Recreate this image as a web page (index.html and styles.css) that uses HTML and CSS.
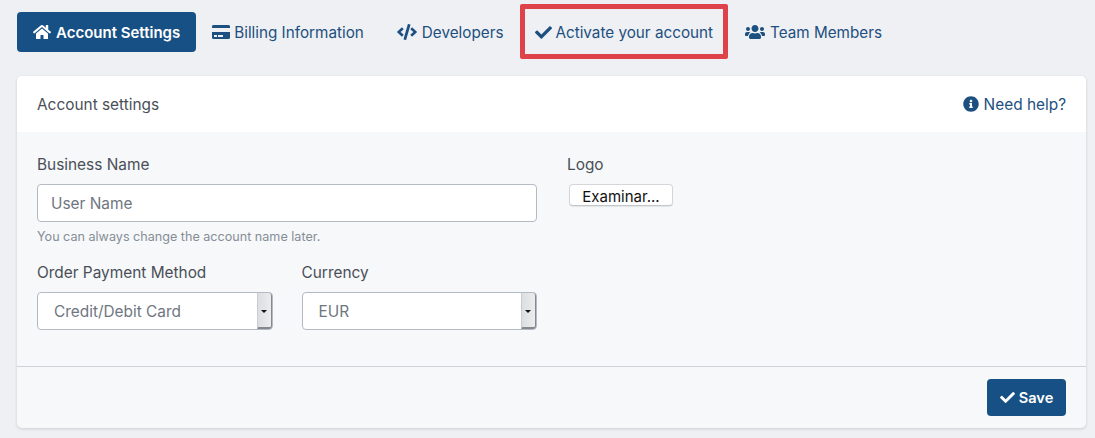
FILE: index.html
```html
<!DOCTYPE html>
<html lang="en">
<head>
<meta charset="utf-8">
<title>Account settings</title>
<link rel="stylesheet" href="styles.css">
</head>
<body>
<svg class="defs" aria-hidden="true">
  <symbol id="i-home" viewBox="0 0 576 512"><path d="M280.37 148.26L96 300.11V464a16 16 0 0 0 16 16l112.06-.29a16 16 0 0 0 15.92-16V368a16 16 0 0 1 16-16h64a16 16 0 0 1 16 16v95.64a16 16 0 0 0 16 16.05L464 480a16 16 0 0 0 16-16V300L295.67 148.26a12.19 12.19 0 0 0-15.3 0zM571.6 251.47L488 182.56V44.05a12 12 0 0 0-12-12h-56a12 12 0 0 0-12 12v72.61L318.47 43a48 48 0 0 0-61 0L4.34 251.47a12 12 0 0 0-1.6 16.9l25.5 31A12 12 0 0 0 45.15 301l235.22-193.74a12.19 12.19 0 0 1 15.3 0L530.9 301a12 12 0 0 0 16.9-1.6l25.5-31a12 12 0 0 0-1.7-16.93z"/></symbol>
  <symbol id="i-card" viewBox="0 0 576 512"><path d="M0 432c0 26.5 21.5 48 48 48h480c26.5 0 48-21.5 48-48V256H0v176zm192-68c0-6.6 5.4-12 12-12h136c6.6 0 12 5.4 12 12v40c0 6.6-5.4 12-12 12H204c-6.6 0-12-5.4-12-12v-40zm-128 0c0-6.6 5.4-12 12-12h72c6.6 0 12 5.4 12 12v40c0 6.6-5.4 12-12 12H76c-6.6 0-12-5.4-12-12v-40zM576 80v48H0V80c0-26.5 21.5-48 48-48h480c26.5 0 48 21.5 48 48z"/></symbol>
  <symbol id="i-code" viewBox="0 0 640 512"><path d="M278.9 511.5l-61-17.7c-6.4-1.8-10-8.5-8.2-14.9L346.2 8.7c1.8-6.4 8.5-10 14.9-8.2l61 17.7c6.4 1.8 10 8.5 8.2 14.9L293.8 503.3c-1.9 6.4-8.5 10.1-14.9 8.2zm-114-112.2l43.5-46.4c4.6-4.9 4.3-12.7-.8-17.2L117 256l90.6-79.7c5.1-4.5 5.5-12.3.8-17.2l-43.5-46.4c-4.5-4.8-12.1-5.1-17-.5L3.8 247.2c-5.1 4.7-5.1 12.8 0 17.5l144.1 135.1c4.9 4.6 12.5 4.4 17-.5zm327.2.6l144.1-135.1c5.1-4.7 5.1-12.8 0-17.5L492.1 112.1c-4.8-4.5-12.4-4.3-17 .5L431.6 159c-4.6 4.9-4.3 12.7.8 17.2L523 256l-90.6 79.7c-5.1 4.5-5.5 12.3-.8 17.2l43.5 46.4c4.5 4.9 12.1 5.1 17 .6z"/></symbol>
  <symbol id="i-check" viewBox="0 0 512 512"><path d="M173.898 439.404l-166.4-166.4c-9.997-9.997-9.997-26.206 0-36.204l36.203-36.204c9.997-9.998 26.207-9.998 36.204 0L192 312.69 432.095 72.596c9.997-9.997 26.207-9.997 36.204 0l36.203 36.204c9.997 9.997 9.997 26.206 0 36.204l-294.4 294.401c-9.998 9.997-26.207 9.997-36.204-.001z"/></symbol>
  <symbol id="i-users" viewBox="0 0 640 512"><path d="M96 224c35.3 0 64-28.7 64-64s-28.7-64-64-64-64 28.7-64 64 28.7 64 64 64zm448 0c35.3 0 64-28.7 64-64s-28.7-64-64-64-64 28.7-64 64 28.7 64 64 64zm32 32h-64c-17.6 0-33.5 7.1-45.1 18.6 40.3 22.1 68.9 62 75.1 109.4h66c17.7 0 32-14.3 32-32v-32c0-35.3-28.7-64-64-64zm-256 0c61.9 0 112-50.1 112-112S381.9 32 320 32 208 82.1 208 144s50.1 112 112 112zm76.8 32h-8.3c-20.8 10-43.9 16-68.5 16s-47.6-6-68.5-16h-8.3C179.6 288 128 339.6 128 403.2V432c0 26.5 21.5 48 48 48h288c26.5 0 48-21.5 48-48v-28.8c0-63.6-51.6-115.2-115.2-115.2zm-223.7-13.4C161.5 263.1 145.6 256 128 256H64c-35.3 0-64 28.7-64 64v32c0 17.7 14.3 32 32 32h65.9c6.3-47.4 34.9-87.3 75.2-109.4z"/></symbol>
  <symbol id="i-info" viewBox="0 0 512 512"><path d="M256 8C119.043 8 8 119.083 8 256c0 136.997 111.043 248 248 248s248-111.003 248-248C504 119.083 392.957 8 256 8zm0 110c23.196 0 42 18.804 42 42s-18.804 42-42 42-42-18.804-42-42 18.804-42 42-42zm56 254c0 6.627-5.373 12-12 12h-88c-6.627 0-12-5.373-12-12v-24c0-6.627 5.373-12 12-12h12v-64h-12c-6.627 0-12-5.373-12-12v-24c0-6.627 5.373-12 12-12h64c6.627 0 12 5.373 12 12v100h12c6.627 0 12 5.373 12 12v24z"/></symbol>
</svg>

<nav class="tabs">
  <a class="tab tab-active"><svg class="icon icon-wide"><use href="#i-home"/></svg>Account Settings</a>
  <a class="tab tab-billing"><svg class="icon icon-card"><use href="#i-card"/></svg>Billing Information</a>
  <a class="tab"><svg class="icon icon-code"><use href="#i-code"/></svg>Developers</a>
  <a class="tab"><svg class="icon icon-check"><use href="#i-check"/></svg>Activate your account<span class="highlight"></span></a>
  <a class="tab"><svg class="icon icon-code"><use href="#i-users"/></svg>Team Members</a>
</nav>

<section class="card">
  <header class="card-head">
    <span class="card-title">Account settings</span>
    <a class="help"><svg class="icon icon-help"><use href="#i-info"/></svg>Need help?</a>
  </header>
  <form class="card-body">
    <div class="col-main">
      <div class="field">
        <label class="label">Business Name</label>
        <input class="input" type="text" placeholder="User Name">
        <p class="hint">You can always change the account name later.</p>
      </div>
      <div class="row">
        <div class="field-select">
          <label class="label">Order Payment Method</label>
          <div class="select-wrap">
            <select class="select"><option>Credit/Debit Card</option></select>
            <span class="spinner"></span>
          </div>
        </div>
        <div class="field-select">
          <label class="label">Currency</label>
          <div class="select-wrap">
            <select class="select"><option>EUR</option></select>
            <span class="spinner"></span>
          </div>
        </div>
      </div>
    </div>
    <div class="col-side">
      <label class="label">Logo</label>
      <button class="file-btn" type="button">Examinar...</button>
    </div>
  </form>
  <footer class="card-foot">
    <button class="save" type="button"><svg class="icon icon-save"><use href="#i-check"/></svg>Save</button>
  </footer>
</section>
</body>
</html>
```
FILE: styles.css
```css
* { box-sizing: border-box; }

html, body { height: 100%; }

body {
  margin: 0;
  padding: 12px 9px 10px 17px;
  background: #eef0f3;
  font-family: Inter, "Liberation Sans", sans-serif;
  font-size: 15.4px;
  color: #4a4f57;
  overflow: hidden;
}

.defs { display: none; }

.tabs {
  display: flex;
  height: 40px;
  margin-bottom: 24px;
}

.tab {
  position: relative;
  display: flex;
  align-items: center;
  padding: 0 16px;
  border-radius: 4px;
  color: #1d4f80;
  font-size: 15.25px;
  font-weight: 400;
  white-space: nowrap;
}

.tab-active {
  background: #175084;
  color: #fff;
  font-size: 15px;
  font-weight: 600;
}

.tab-billing { margin-right: 1px; }

.highlight {
  position: absolute;
  top: -8px;
  bottom: -7px;
  left: 1px;
  right: 1px;
  border: 5px solid #de4349;
  border-radius: 2px;
}

.icon {
  width: 16px;
  height: 16px;
  margin-right: 5px;
  fill: currentColor;
  flex: none;
}

.icon-wide { width: 18px; }

.icon-card { width: 18px; margin-right: 4px; }

.icon-code { width: 20px; }

.icon-check { width: 17px; height: 17px; margin-right: 3px; }

.card {
  display: flex;
  flex-direction: column;
  height: 352px;
  background: #f6f8fa;
  border-radius: 5px;
  box-shadow: 0 1px 3px rgba(40, 50, 70, .18);
  overflow: hidden;
}

.card-head {
  display: flex;
  justify-content: space-between;
  align-items: center;
  flex: none;
  height: 56px;
  padding: 0 20px;
  background: #fff;
}

.card-title { font-weight: 400; }

.help {
  display: flex;
  align-items: center;
  color: #1d4f80;
  font-weight: 400;
}

.icon-help { width: 16px; height: 16px; }

.card-body {
  display: flex;
  gap: 30px;
  flex: 1;
  padding: 24px 20px 0;
}

.col-main { width: 500px; flex: none; }

.col-side { flex: 1; }

.label {
  display: block;
  height: 18px;
  line-height: 18px;
  margin-bottom: 10px;
}

.input {
  display: block;
  width: 100%;
  height: 38px;
  padding: 0 13px;
  background: #fff;
  border: 1px solid #b4bac3;
  border-radius: 4px;
  font: 400 15.4px Inter, "Liberation Sans", sans-serif;
  color: #6f767f;
}

.input::placeholder { color: #6f767f; opacity: 1; }

.hint {
  margin: 7px 0 0;
  font-size: 12.6px;
  line-height: 16px;
  color: #868d96;
}

.row {
  display: flex;
  gap: 29px;
  margin-top: 19px;
}

.field-select { flex: 1; }

.select-wrap { position: relative; }

.select {
  display: block;
  width: 100%;
  height: 38px;
  padding: 0 16px;
  appearance: none;
  background: #fff;
  border: 1px solid #b4bac3;
  border-radius: 4px;
  font: 400 15.4px Inter, "Liberation Sans", sans-serif;
  color: #6f767f;
}

.spinner {
  position: absolute;
  top: 1px;
  right: 1px;
  bottom: 1px;
  width: 15px;
  background: linear-gradient(to right, #dcdee1, #ececee);
  border-left: 1px solid #c9ccd1;
  border-right: 1px solid #85898f;
  border-bottom: 2px solid #85898f;
  border-radius: 0 3px 3px 0;
}

.spinner::after {
  content: "";
  position: absolute;
  top: 17px;
  left: 3px;
  border: 3px solid transparent;
  border-top: 3px solid #111;
  border-bottom: 0;
}

.file-btn {
  display: block;
  width: 104px;
  height: 22px;
  margin: 2px 0 0 2px;
  padding: 2px 0 0;
  background: #fff;
  border: 1px solid #d4d6da;
  border-bottom-color: #c4c6cb;
  border-radius: 4px;
  box-shadow: 0 1px 1px rgba(0, 0, 0, .08);
  font: 400 15px Inter, "Liberation Sans", sans-serif;
  color: #111;
}

.card-foot {
  display: flex;
  justify-content: flex-end;
  align-items: flex-start;
  flex: none;
  height: 62px;
  padding: 12px 20px 0;
  border-top: 1px solid #cfd2d7;
}

.save {
  display: flex;
  align-items: center;
  justify-content: center;
  width: 79px;
  height: 37px;
  padding: 0;
  background: #175084;
  border: 0;
  border-radius: 4px;
  color: #fff;
  font: 600 14.6px Inter, "Liberation Sans", sans-serif;
}

.icon-save { width: 15px; height: 15px; margin-right: 4px; }
```
